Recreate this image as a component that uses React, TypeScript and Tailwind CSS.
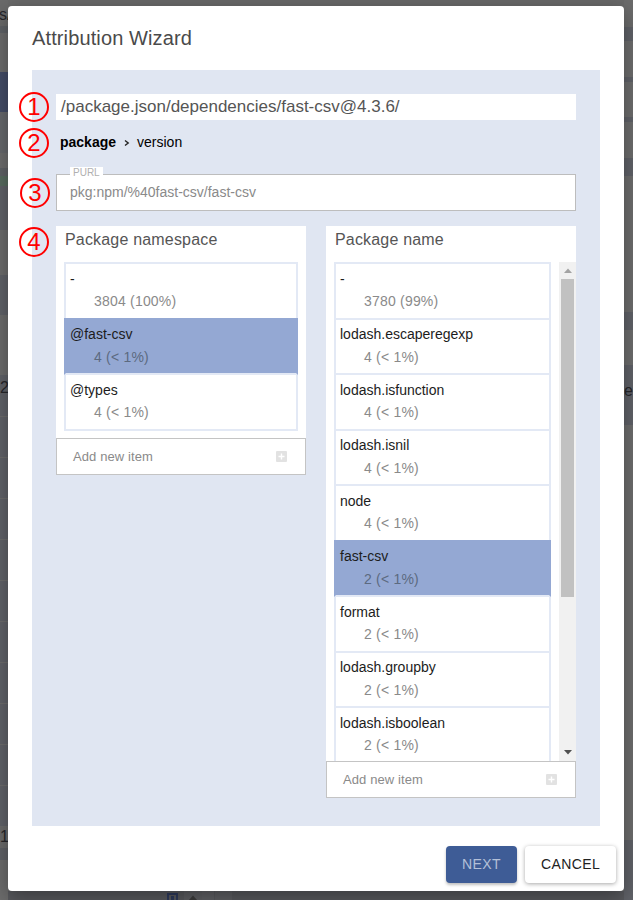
const leftBands = [
  { cls: 'h-[26px] bg-[#6a6a6a]', text: 's/', textCls: 'pt-[6px] -ml-[1px] text-[#26262a]' },
  { cls: 'h-[7px] bg-[#5f6266]' },
  { cls: 'h-[39px] bg-[#6c6c6c]' },
  { cls: 'h-[40px] bg-[#434c66]' },
  { cls: 'h-[41px] bg-[#66686c]' },
  { cls: 'h-[15px] bg-[#6d6d6d]' },
  { cls: 'h-[8px] bg-[#5f6266]' },
  { cls: 'h-[10px] bg-[#586c60]' },
  { cls: 'h-[44px] bg-[#606268]' },
  { cls: 'h-[45px] bg-[#6c6c6c]' },
  { cls: 'h-[40px] bg-[#606268]' },
  { cls: 'h-[60px] bg-[#6c6c6c]' },
  { cls: 'h-[42px] bg-[#606268] border-b border-[#6c6c6c]', text: '2', textCls: 'pt-[4px] text-[#26262a]' },
];

const rightBands = [
  { cls: 'h-[27px] bg-[#6b6b6b]' },
  { cls: 'h-[14px] bg-[#606268]' },
  { cls: 'h-[36px] bg-[#6d6d6d]' },
  { cls: 'h-[5px] bg-[#606268]' },
  { cls: 'h-[35px] bg-[#6d6d6d]' },
  { cls: 'h-[5px] bg-[#606268]' },
  { cls: 'h-[36px] bg-[#6d6d6d]' },
  { cls: 'h-[18px] bg-[#606268]' },
  { cls: 'h-[136px] bg-[#6d6d6d]' },
  { cls: 'h-[18px] bg-[#606268]' },
  { cls: 'h-[35px] bg-[#6d6d6d]' },
  { cls: 'h-[60px] bg-[#606268]', text: 'e', textCls: 'pt-[17px] text-[#26262a]' },
  { cls: 'h-[415px] bg-[#6d6d6d]' },
  { cls: 'h-[60px] bg-[#606268]' },
];

const namespaces = [
  { name: '-', count: '3804 (100%)' },
  { name: '@fast-csv', count: '4 (< 1%)', selected: true },
  { name: '@types', count: '4 (< 1%)' },
];

const packages = [
  { name: '-', count: '3780 (99%)' },
  { name: 'lodash.escaperegexp', count: '4 (< 1%)' },
  { name: 'lodash.isfunction', count: '4 (< 1%)' },
  { name: 'lodash.isnil', count: '4 (< 1%)' },
  { name: 'node', count: '4 (< 1%)' },
  { name: 'fast-csv', count: '2 (< 1%)', selected: true },
  { name: 'format', count: '2 (< 1%)' },
  { name: 'lodash.groupby', count: '2 (< 1%)' },
  { name: 'lodash.isboolean', count: '2 (< 1%)' },
];

type Band = { cls: string; text?: string; textCls?: string };

function BandColumn({ bands, width }: { bands: Band[]; width: string }) {
  return (
    <div className={`flex shrink-0 flex-col overflow-hidden ${width}`}>
      {bands.map((band, i) => (
        <div key={i} className={`shrink-0 overflow-hidden text-[16px] leading-[18px] ${band.cls} ${band.textCls ?? ''}`}>
          {band.text}
        </div>
      ))}
      {bands === leftBands && (
        <>
          {Array.from({ length: 10 }).map((_, i) => (
            <div key={i} className="h-[41px] shrink-0 border-b border-[#6c6c6c] bg-[#606268]" />
          ))}
          <div className="h-[21px] shrink-0 bg-[#6b6b6b] pt-[1px] text-[16px] leading-[18px] text-[#26262a]">1</div>
          <div className="h-[12px] shrink-0 bg-[#5f6166]" />
        </>
      )}
    </div>
  );
}

function Marker({ n, top }: { n: number; top: string }) {
  return (
    <div
      className={`absolute -left-[37px] flex h-[30px] w-[30px] items-center justify-center rounded-full border-2 border-[#ff0000] text-[24px] leading-none text-[#ff0000] ${top}`}
    >
      {n}
    </div>
  );
}

function Row({ name, count, selected }: { name: string; count: string; selected?: boolean }) {
  return (
    <div
      className={
        selected
          ? '-mt-[2px] h-[57.5px] shrink-0 border-x-2 border-b-2 border-x-[#94a8d3] border-b-[#e3e9f5] bg-[#94a8d3] pt-[2px]'
          : 'h-[55.5px] shrink-0 border-x-2 border-b-2 border-[#e3e9f5] bg-white'
      }
    >
      <div className="pl-[4px] pt-[4.5px] text-[14px] leading-[20px] text-[#1c1c1c]">{name}</div>
      <div className={`pl-[28px] pt-[2.5px] text-[14px] leading-[20px] tracking-[0.2px] ${selected ? 'text-[#5c6a80]' : 'text-[#8a8a8a]'}`}>
        {count}
      </div>
    </div>
  );
}

function AddItem() {
  return (
    <div className="flex h-[37px] shrink-0 items-center justify-between border border-[#c4c4c4] bg-white pl-[16px] pr-[18px] text-[13px] tracking-[0.1px] text-[#8a8a8a]">
      <span>Add new item</span>
      <svg width="11" height="11" viewBox="0 0 11 11">
        <rect width="11" height="11" rx="1" fill="#e2e2e2" />
        <path d="M5.5 2.5v6M2.5 5.5h6" stroke="#fff" strokeWidth="1.4" />
      </svg>
    </div>
  );
}

export default function App() {
  return (
    <div className="flex h-[900px] w-[633px] overflow-hidden bg-[#6c6c6c] font-['Liberation_Sans',Arial,sans-serif]">
      <BandColumn bands={leftBands} width="w-[8px]" />
      <div className="flex w-[616px] shrink-0 flex-col">
        <div className="h-[6px] shrink-0 bg-[#686868]" />
        <div className="relative z-10 flex h-[885px] shrink-0 flex-col rounded-[4px] bg-white shadow-[0_6px_20px_rgba(0,0,0,0.35)]">
          <h1 className="h-[64px] shrink-0 pl-[24px] pt-[20px] text-[20px] leading-[24px] tracking-[0.12px] text-[#4a4a4a]">Attribution Wizard</h1>
          <div className="mx-[24px] flex h-[756px] shrink-0 flex-col bg-[#e0e6f2] px-[24px] pt-[24px]">
            <div className="relative h-[26px] shrink-0 bg-white pl-[5px] text-[17px] leading-[26px] text-[#555555]">
              <Marker n={1} top="-top-[2px]" />
              /package.json/dependencies/fast-csv@4.3.6/
            </div>
            <div className="relative flex h-[44px] shrink-0 items-center pl-[4px] text-[14px] text-black">
              <Marker n={2} top="top-[8px]" />
              <span className="font-bold">package</span>
              <svg className="ml-[7px] mr-[6px] mt-[2px]" width="8" height="8" viewBox="0 0 8 8" fill="none">
                <path d="M2 1.5 5.2 4 2 6.5" stroke="#222" strokeWidth="1.4" />
              </svg>
              <span>version</span>
            </div>
            <div className="relative mt-[10px] flex h-[37px] shrink-0 items-center border border-[#bdbdbd] bg-white pl-[13px] text-[14px] text-[#8a8a8a]">
              <Marker n={3} top="top-[3px]" />
              <span className="absolute -top-[8px] left-[13px] bg-white px-[3px] text-[10px] leading-[12px] text-[#b0b0b0]">PURL</span>
              pkg:npm/%40fast-csv/fast-csv
            </div>
            <div className="relative mt-[15px] flex items-start gap-[20px]">
              <Marker n={4} top="top-[1px]" />
              <div className="flex w-[250px] shrink-0 flex-col bg-white">
                <div className="h-[36px] shrink-0 pl-[9px] pt-[5px] text-[16px] leading-[18px] tracking-[0.18px] text-[#555555]">Package namespace</div>
                <div className="mx-[8px] flex flex-col border-t-2 border-[#e3e9f5]">
                  {namespaces.map((item) => (
                    <Row key={item.name} {...item} />
                  ))}
                </div>
                <div className="h-[7.5px] shrink-0" />
                <AddItem />
              </div>
              <div className="flex w-[250px] shrink-0 flex-col bg-white">
                <div className="h-[36px] shrink-0 pl-[9px] pt-[5px] text-[16px] leading-[18px] tracking-[0.18px] text-[#555555]">Package name</div>
                <div className="flex h-[499px] shrink-0 overflow-hidden">
                  <div className="ml-[8px] flex w-[217px] shrink-0 flex-col overflow-hidden border-t-2 border-[#e3e9f5]">
                    {packages.map((item) => (
                      <Row key={item.name} {...item} />
                    ))}
                  </div>
                  <div className="ml-[8px] flex w-[17px] shrink-0 flex-col bg-[#f1f1f1] px-[2px]">
                    <div className="flex h-[17px] shrink-0 items-center justify-center">
                      <svg width="8" height="5" viewBox="0 0 8 5">
                        <path d="M0 5 4 0.5 8 5z" fill="#a3a3a3" />
                      </svg>
                    </div>
                    <div className="h-[318px] shrink-0 bg-[#c1c1c1]" />
                    <div className="mt-auto flex h-[17px] shrink-0 items-center justify-center">
                      <svg width="8" height="5" viewBox="0 0 8 5">
                        <path d="M0 0 4 4.5 8 0z" fill="#505050" />
                      </svg>
                    </div>
                  </div>
                </div>
                <AddItem />
              </div>
            </div>
          </div>
          <div className="flex flex-1 items-start justify-end gap-[8px] pr-[8px] pt-[20px]">
            <button className="flex h-[37px] w-[71px] items-center justify-center rounded-[4px] bg-[#3e5c96] text-[14px] tracking-[0.4px] text-[#b4c0d8] shadow-[0_2px_3px_rgba(0,0,0,0.25)]">
              NEXT
            </button>
            <button className="flex h-[37px] w-[91px] items-center justify-center rounded-[4px] bg-white text-[14px] tracking-[0.4px] text-[#222222] shadow-[0_1px_4px_rgba(0,0,0,0.35)]">
              CANCEL
            </button>
          </div>
        </div>
        <div className="flex h-[9px] shrink-0 bg-[#58595d] pl-[159px]">
          <div className="mt-[2px] flex h-[12px] w-[11px] justify-center border-2 border-[#2e3a5c] pt-[1px]">
            <div className="h-[4px] w-[3px] bg-[#2e3a5c]" />
          </div>
          <div className="ml-[6px] flex w-[18px] justify-center bg-[#5e5f63] pt-[4px]">
            <svg width="8" height="5" viewBox="0 0 8 5">
              <path d="M0 5 4 0.5 8 5z" fill="#3c3c3c" />
            </svg>
          </div>
          <div className="w-[12px] bg-[#606165]" />
          <div className="ml-[1px] w-[17px] bg-[#5e5f63]" />
        </div>
      </div>
      <BandColumn bands={rightBands} width="w-[9px]" />
    </div>
  );
}
